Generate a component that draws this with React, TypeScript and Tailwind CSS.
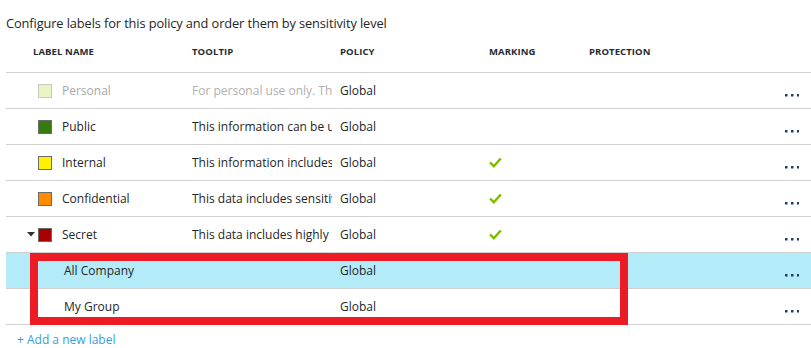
import React from "react";

type Row = {
  name: string;
  color?: string;
  tooltip: string;
  policy: string;
  marking?: boolean;
  muted?: boolean;
  expand?: boolean;
  child?: boolean;
  selected?: boolean;
};

const rows: Row[] = [
  { name: "Personal", color: "#eaf5c4", tooltip: "For personal use only. This label is not", policy: "Global", muted: true },
  { name: "Public", color: "#377a0e", tooltip: "This information can be used publicly", policy: "Global" },
  { name: "Internal", color: "#fff200", tooltip: "This information includes internal data", policy: "Global", marking: true },
  { name: "Confidential", color: "#ff8c00", tooltip: "This data includes sensitive business data", policy: "Global", marking: true },
  { name: "Secret", color: "#a80000", tooltip: "This data includes highly sensitive data", policy: "Global", marking: true, expand: true },
  { name: "All Company", tooltip: "", policy: "Global", child: true, selected: true },
  { name: "My Group", tooltip: "", policy: "Global", child: true },
];

function Check() {
  return (
    <svg width="13" height="11" viewBox="0 0 13 11">
      <path d="M1 5.5 L4.8 9.2 L11.8 1.5" fill="none" stroke="#7fba00" strokeWidth="2.4" />
    </svg>
  );
}

function Dots() {
  return (
    <svg width="14" height="3" viewBox="0 0 14 3" className="mt-[10px]">
      <rect x="0" y="0" width="2.5" height="2.5" fill="#1f3d66" />
      <rect x="6" y="0" width="2.5" height="2.5" fill="#1f3d66" />
      <rect x="12" y="0" width="2.5" height="2.5" fill="#1f3d66" />
    </svg>
  );
}

export default function App() {
  return (
    <div
      className="relative w-[811px] h-[348px] bg-white overflow-hidden text-[#252525]"
      style={{ fontFamily: "'Segoe UI', 'Open Sans', 'Noto Sans', sans-serif" }}
    >
      <div className="pl-[6px] pt-[13px] h-[37px] text-[12.8px] leading-[20px] tracking-[-0.1px]">
        Configure labels for this policy and order them by sensitivity level
      </div>
      <div className="ml-[6px]">
        <div className="flex items-center h-[36px] pb-[4px] border-b border-[#d0d0d0] text-[9.5px] font-bold uppercase tracking-[0.1px] text-[#262b33]">
          <div className="w-[186px] pl-[27px]">Label name</div>
          <div className="w-[148px]">Tooltip</div>
          <div className="w-[149px]">Policy</div>
          <div className="w-[100px]">Marking</div>
          <div className="flex-1">Protection</div>
        </div>
        {rows.map((r) => (
          <div
            key={r.name}
            className={`flex items-center h-[36px] border-b border-[#d0d0d0] text-[12px] ${r.selected ? "bg-[#b3ebf9]" : ""}`}
          >
            <div className="w-[32px] flex justify-end pr-[3px]">
              {r.expand && (
                <svg width="8" height="5" viewBox="0 0 8 5">
                  <path d="M0 0 L8 0 L4 4.5 Z" fill="#333" />
                </svg>
              )}
            </div>
            <div className={`w-[154px] flex items-center ${r.child ? "pl-[26px]" : ""}`}>
              {r.color && (
                <div
                  className={`w-[14px] h-[14px] shrink-0 border ${r.muted ? "border-[#c8c8c8]" : "border-[#6b6b6b]"}`}
                  style={{ backgroundColor: r.color }}
                />
              )}
              <span className={`${r.color ? "ml-[10px]" : ""} ${r.muted ? "text-[#a8a8a8]" : ""}`}>{r.name}</span>
            </div>
            <div className="w-[148px] overflow-hidden">
              <div className={`w-[140px] overflow-hidden whitespace-nowrap ${r.muted ? "text-[#b0b0b0]" : ""}`}>
                {r.tooltip}
              </div>
            </div>
            <div className="w-[149px]">{r.policy}</div>
            <div className="w-[100px] flex items-center">{r.marking && <Check />}</div>
            <div className="flex-1" />
            <div className="w-[26px] flex">
              <Dots />
            </div>
          </div>
        ))}
        <div className="pl-[11px] pt-[6px] text-[12px] text-[#3aa0dc]">+ Add a new label</div>
      </div>
      <div className="absolute left-[30px] top-[253px] w-[598px] h-[72px] border-[8px] border-[#ed1c24]" />
    </div>
  );
}
